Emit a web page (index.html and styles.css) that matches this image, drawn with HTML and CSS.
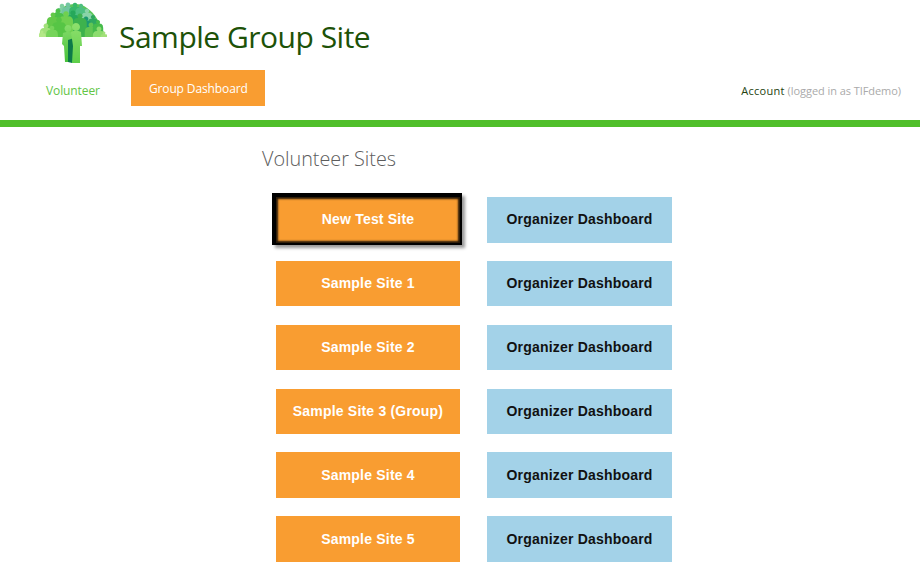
FILE: index.html
```html
<!DOCTYPE html>
<html lang="en">
<head>
    <meta charset="UTF-8">
    <title>Sample Group Site</title>
    <link rel="stylesheet" href="styles.css">
</head>
<body>
    <header class="site-header">
        <div class="brand">
            <svg class="logo" viewBox="0 0 68 64" width="68" height="64" aria-hidden="true">
                <defs>
                    <path id="person" d="M0 -1 a1 1 0 1 1 -.01 0 Z M-1.6 .9 Q0 .5 1.6 .9 Q2.6 1.4 2.6 3 L2.6 12 L-2.600 12 L-2.600 3 Q-2.600 1.400 -1.600 .9 Z"/>
                    <clipPath id="canopy"><path d="M0 37 L68 37 L68 0 L0 0 Z"/></clipPath>
                    <filter id="soft"><feGaussianBlur stdDeviation="0.45"/></filter>
                    <linearGradient id="front-a" x1="0" y1="0" x2="0" y2="1">
                        <stop offset="0" stop-color="#86dc6a"/><stop offset="1" stop-color="#47c23a"/>
                    </linearGradient>
                    <linearGradient id="front-b" x1="0" y1="0" x2="0" y2="1">
                        <stop offset="0" stop-color="#8fe06e"/><stop offset="1" stop-color="#5fcf4a"/>
                    </linearGradient>
                </defs>
                <g filter="url(#soft)">
                    <path d="M2 36 C6 24 14 12 24 7 C32 3 42 3 48 8 C56 13 62 24 66 36 Z" fill="#5cc65a"/>
                    <g clip-path="url(#canopy)">
                        <use href="#person" transform="translate(23 6) scale(2.300)" fill="#7fcfa0"/>
                        <use href="#person" transform="translate(29 5) scale(2.400)" fill="#6fc6a0"/>
                        <use href="#person" transform="translate(36 5) scale(2.300)" fill="#38b86a"/>
                        <use href="#person" transform="translate(42 6) scale(2.200)" fill="#4dbf80"/>
                        <use href="#person" transform="translate(48 11) scale(2.200)" fill="#8ad4a8"/>
                        <use href="#person" transform="translate(54 17) scale(2.100)" fill="#2fa860"/>
                        <use href="#person" transform="translate(47 19) scale(2.400)" fill="#1f9a70"/>
                        <use href="#person" transform="translate(34 13) scale(2.600)" fill="#27a85a"/>
                        <use href="#person" transform="translate(19 11) scale(2.400)" fill="#4cc04a"/>
                        <use href="#person" transform="translate(14 15) scale(2.400)" fill="#63c94a"/>
                        <use href="#person" transform="translate(27 14) scale(2.800)" fill="#6fd050"/>
                        <use href="#person" transform="translate(20 20) scale(2.800)" fill="#57c545"/>
                        <use href="#person" transform="translate(41 16) scale(2.600)" fill="#3db24e"/>
                        <use href="#person" transform="translate(52 25) scale(2.400)" fill="#62c552"/>
                        <use href="#person" transform="translate(59 22) scale(2)" fill="#45bb4c"/>
                        <use href="#person" transform="translate(7 26) scale(2.400)" fill="#a2e07a"/>
                        <use href="#person" transform="translate(13 28) scale(2.300)" fill="#76d45a"/>
                        <use href="#person" transform="translate(60 29) scale(2.400)" fill="#8cdc6e"/>
                        <use href="#person" transform="translate(3 32) scale(1.500)" fill="#b4e888"/>
                        <use href="#person" transform="translate(65 33) scale(1.400)" fill="#a2e07a"/>
                    </g>
                    <path d="M29 25 a3.5 3.5 0 1 1 -.01 0 Z M24 33 Q29 31 33 33 L34 46 L32 62 L26 62 L25 46 L23 44 Z" fill="url(#front-a)"/>
                    <path d="M29 40 L35 38 L36 60 L33 63 L29 62 Z" fill="#0c7a48"/>
                    <path d="M37 23 a4 4 0 1 1 -.01 0 Z M32 32 Q37 29.500 42 32 L43 46 L41 46 L41 63 L33 63 L34 46 Z" fill="url(#front-b)"/>
                </g>
            </svg>
            <h1 class="site-title">Sample Group Site</h1>
        </div>
        <nav class="main-nav">
            <ul class="nav-tabs">
                <li><a class="nav-link" href="#">Volunteer</a></li>
                <li><a class="nav-link active" href="#">Group Dashboard</a></li>
            </ul>
            <p class="account"><a href="#">Account</a> <span class="logged-in">(logged in as TIFdemo)</span></p>
        </nav>
    </header>

    <main class="content">
        <h2 class="section-title">Volunteer Sites</h2>
        <div class="site-list">
            <a class="btn btn-site selected" href="#">New Test Site</a>
            <a class="btn btn-organizer" href="#">Organizer Dashboard</a>
            <a class="btn btn-site" href="#">Sample Site 1</a>
            <a class="btn btn-organizer" href="#">Organizer Dashboard</a>
            <a class="btn btn-site" href="#">Sample Site 2</a>
            <a class="btn btn-organizer" href="#">Organizer Dashboard</a>
            <a class="btn btn-site" href="#">Sample Site 3 (Group)</a>
            <a class="btn btn-organizer" href="#">Organizer Dashboard</a>
            <a class="btn btn-site" href="#">Sample Site 4</a>
            <a class="btn btn-organizer" href="#">Organizer Dashboard</a>
            <a class="btn btn-site" href="#">Sample Site 5</a>
            <a class="btn btn-organizer" href="#">Organizer Dashboard</a>
        </div>
    </main>
</body>
</html>
```

FILE: styles.css
```css
:root {
    --green: #50bf2a;
    --dark-green: #1d5208;
    --orange: #f99d31;
    --blue: #a3d2e8;
}

body {
    margin: 0;
    background-color: #ffffff;
    font-family: 'Open Sans', sans-serif;
    color: #222;
}

a {
    text-decoration: none;
}

.site-header {
    height: 120px;
    border-bottom: 7px solid var(--green);
}

.brand {
    display: flex;
    align-items: flex-start;
    height: 70px;
    padding-left: 39px;
}

.logo {
    flex: none;
}

.site-title {
    margin: 15px 0 0 12px;
    font-size: 30px;
    line-height: 44px;
    font-weight: 400;
    letter-spacing: -0.5px;
    color: var(--dark-green);
}

.main-nav {
    display: flex;
    justify-content: space-between;
    align-items: center;
    height: 36px;
    padding-right: 19px;
}

.nav-tabs {
    display: flex;
    align-items: center;
    list-style: none;
    margin: 0;
    padding: 0 0 0 46px;
}

.nav-link {
    display: block;
    font-size: 12px;
    letter-spacing: -0.1px;
    color: #62c545;
    padding-top: 5px;
}

.nav-link.active {
    margin-left: 31px;
    padding: 1px 17px 0 18px;
    line-height: 35px;
    letter-spacing: -0.12px;
    background-color: var(--orange);
    color: #ffffff;
}

.account {
    margin: 5px 0 0;
    font-size: 11px;
}

.account a {
    letter-spacing: 0.3px;
    color: #24420f;
}

.logged-in {
    letter-spacing: -0.06px;
    color: #aaa;
}

.content {
    padding-left: 262px;
}

.section-title {
    margin: 0;
    padding-top: 19px;
    font-size: 19.8px;
    line-height: 26px;
    font-weight: 300;
    color: #5c5c5c;
}

.site-list {
    display: grid;
    grid-template-columns: 184px 185px;
    grid-auto-rows: 45.7px;
    column-gap: 27px;
    row-gap: 18.2px;
    margin-top: 24.9px;
    padding-left: 14px;
}

.btn {
    display: flex;
    align-items: center;
    justify-content: center;
    padding-bottom: 0.5px;
    font-family: 'Liberation Sans', Arial, sans-serif;
    font-size: 14px;
    font-weight: 700;
    letter-spacing: 0.2px;
}

.btn-site {
    background-color: var(--orange);
    color: #ffffff;
}

.btn-organizer {
    background-color: var(--blue);
    color: #111;
}

.btn-site.selected {
    box-shadow: -1px -1px 0 3px #000, inset 0 0 2px 2px rgba(0, 0, 0, 0.85), 2px 2px 3px 3px rgba(0, 0, 0, 0.4);
}
```
